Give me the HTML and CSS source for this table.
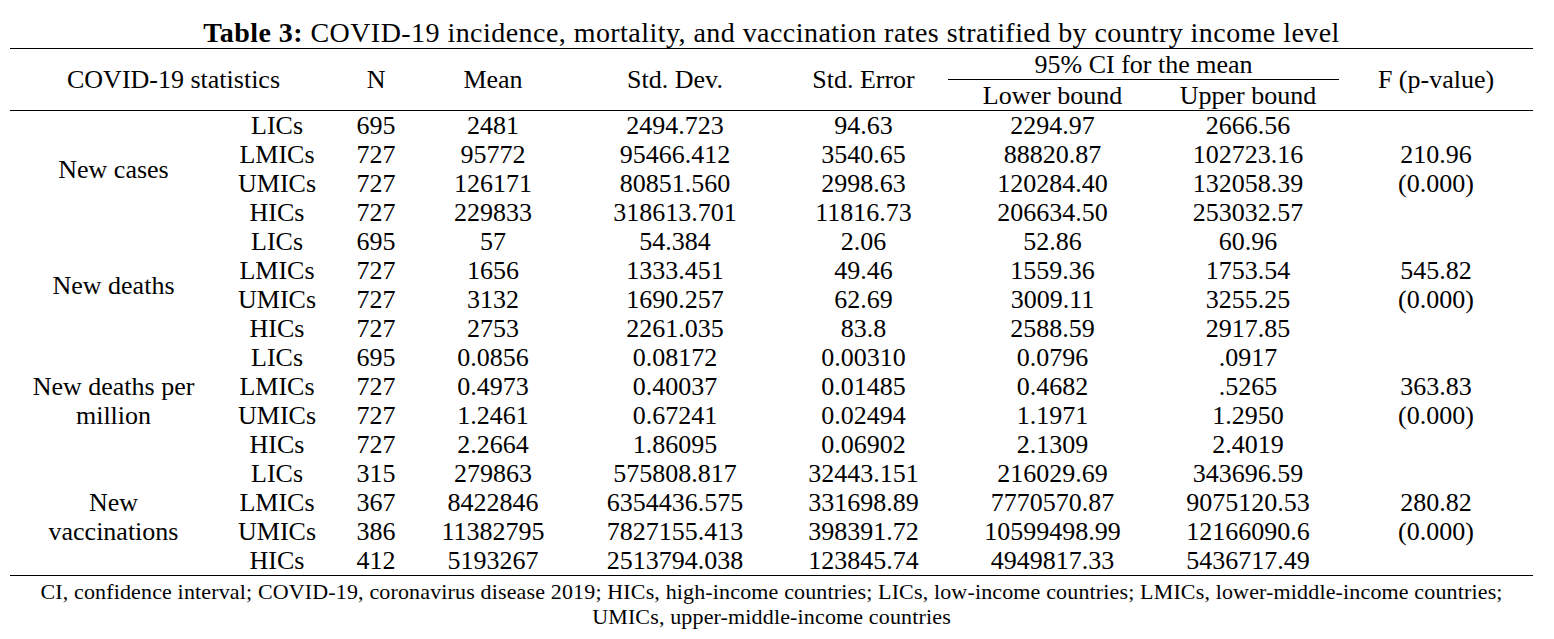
FILE: index.html
```html
<!DOCTYPE html>
<html lang="en">
<head>
<meta charset="utf-8">
<title>Table 3</title>
<link rel="stylesheet" href="styles.css">
</head>
<body>
<div class="page">
  <div class="title"><b>Table 3:</b> COVID-19 incidence, mortality, and vaccination rates stratified by country income level</div>
  <table class="stats">
    <colgroup>
      <col class="c1"><col class="c2"><col class="c3"><col class="c4"><col class="c5"><col class="c6"><col class="c7"><col class="c8"><col class="c9">
    </colgroup>
    <thead>
      <tr class="h1">
        <th colspan="2" rowspan="2">COVID-19 statistics</th>
        <th rowspan="2">N</th>
        <th rowspan="2">Mean</th>
        <th rowspan="2">Std. Dev.</th>
        <th rowspan="2">Std. Error</th>
        <th colspan="2" class="ci">95% CI for the mean</th>
        <th rowspan="2">F (p-value)</th>
      </tr>
      <tr class="h2">
        <th>Lower bound</th>
        <th>Upper bound</th>
      </tr>
    </thead>
    <tbody>
      <tr><td rowspan="4" class="label">New cases</td><td>LICs</td><td>695</td><td>2481</td><td>2494.723</td><td>94.63</td><td>2294.97</td><td>2666.56</td><td rowspan="4" class="f">210.96<br>(0.000)</td></tr>
      <tr><td>LMICs</td><td>727</td><td>95772</td><td>95466.412</td><td>3540.65</td><td>88820.87</td><td>102723.16</td></tr>
      <tr><td>UMICs</td><td>727</td><td>126171</td><td>80851.560</td><td>2998.63</td><td>120284.40</td><td>132058.39</td></tr>
      <tr><td>HICs</td><td>727</td><td>229833</td><td>318613.701</td><td>11816.73</td><td>206634.50</td><td>253032.57</td></tr>

      <tr><td rowspan="4" class="label">New deaths</td><td>LICs</td><td>695</td><td>57</td><td>54.384</td><td>2.06</td><td>52.86</td><td>60.96</td><td rowspan="4" class="f">545.82<br>(0.000)</td></tr>
      <tr><td>LMICs</td><td>727</td><td>1656</td><td>1333.451</td><td>49.46</td><td>1559.36</td><td>1753.54</td></tr>
      <tr><td>UMICs</td><td>727</td><td>3132</td><td>1690.257</td><td>62.69</td><td>3009.11</td><td>3255.25</td></tr>
      <tr><td>HICs</td><td>727</td><td>2753</td><td>2261.035</td><td>83.8</td><td>2588.59</td><td>2917.85</td></tr>

      <tr><td rowspan="4" class="label">New deaths per<br>million</td><td>LICs</td><td>695</td><td>0.0856</td><td>0.08172</td><td>0.00310</td><td>0.0796</td><td>.0917</td><td rowspan="4" class="f">363.83<br>(0.000)</td></tr>
      <tr><td>LMICs</td><td>727</td><td>0.4973</td><td>0.40037</td><td>0.01485</td><td>0.4682</td><td>.5265</td></tr>
      <tr><td>UMICs</td><td>727</td><td>1.2461</td><td>0.67241</td><td>0.02494</td><td>1.1971</td><td>1.2950</td></tr>
      <tr><td>HICs</td><td>727</td><td>2.2664</td><td>1.86095</td><td>0.06902</td><td>2.1309</td><td>2.4019</td></tr>

      <tr><td rowspan="4" class="label">New<br>vaccinations</td><td>LICs</td><td>315</td><td>279863</td><td>575808.817</td><td>32443.151</td><td>216029.69</td><td>343696.59</td><td rowspan="4" class="f">280.82<br>(0.000)</td></tr>
      <tr><td>LMICs</td><td>367</td><td>8422846</td><td>6354436.575</td><td>331698.89</td><td>7770570.87</td><td>9075120.53</td></tr>
      <tr><td>UMICs</td><td>386</td><td>11382795</td><td>7827155.413</td><td>398391.72</td><td>10599498.99</td><td>12166090.6</td></tr>
      <tr><td>HICs</td><td>412</td><td>5193267</td><td>2513794.038</td><td>123845.74</td><td>4949817.33</td><td>5436717.49</td></tr>
    </tbody>
  </table>
  <p class="note">CI, confidence interval; COVID-19, coronavirus disease 2019; HICs, high-income countries; LICs, low-income countries; LMICs, lower-middle-income countries;<br>UMICs, upper-middle-income countries</p>
</div>
</body>
</html>
```
FILE: styles.css
```css
html, body {
  margin: 0;
  padding: 0;
  background: #ffffff;
}

body {
  font-family: "Liberation Serif", "Times New Roman", serif;
  color: #000000;
}

.page {
  width: 1523px;
  padding-left: 10px;
}

.title {
  margin-top: 18px;
  height: 30px;
  line-height: 30px;
  font-size: 28px;
  letter-spacing: 0.45px;
  text-align: center;
  white-space: nowrap;
}

.title b {
  font-weight: bold;
}

.stats {
  width: 1523px;
  table-layout: fixed;
  border-collapse: collapse;
  font-size: 26px;
  line-height: 29px;
}

.c1 { width: 207px; }
.c2 { width: 120px; }
.c3 { width: 78px; }
.c4 { width: 156px; }
.c5 { width: 208px; }
.c6 { width: 169px; }
.c7 { width: 209px; }
.c8 { width: 182px; }
.c9 { width: 194px; }

.stats th,
.stats td {
  padding: 0;
  text-align: center;
  vertical-align: middle;
  font-weight: normal;
  white-space: nowrap;
}

.stats thead {
  border-top: 1px solid #000;
  border-bottom: 1px solid #000;
}

.stats thead tr {
  height: 31px;
}

.stats thead .ci {
  border-bottom: 1px solid #000;
}

.stats tbody tr {
  height: 29px;
}

.stats tbody {
  border-bottom: 1px solid #000;
}

.note {
  margin: 3px 0 0 0;
  font-size: 22px;
  letter-spacing: 0.15px;
  line-height: 25px;
  text-align: center;
}
```
